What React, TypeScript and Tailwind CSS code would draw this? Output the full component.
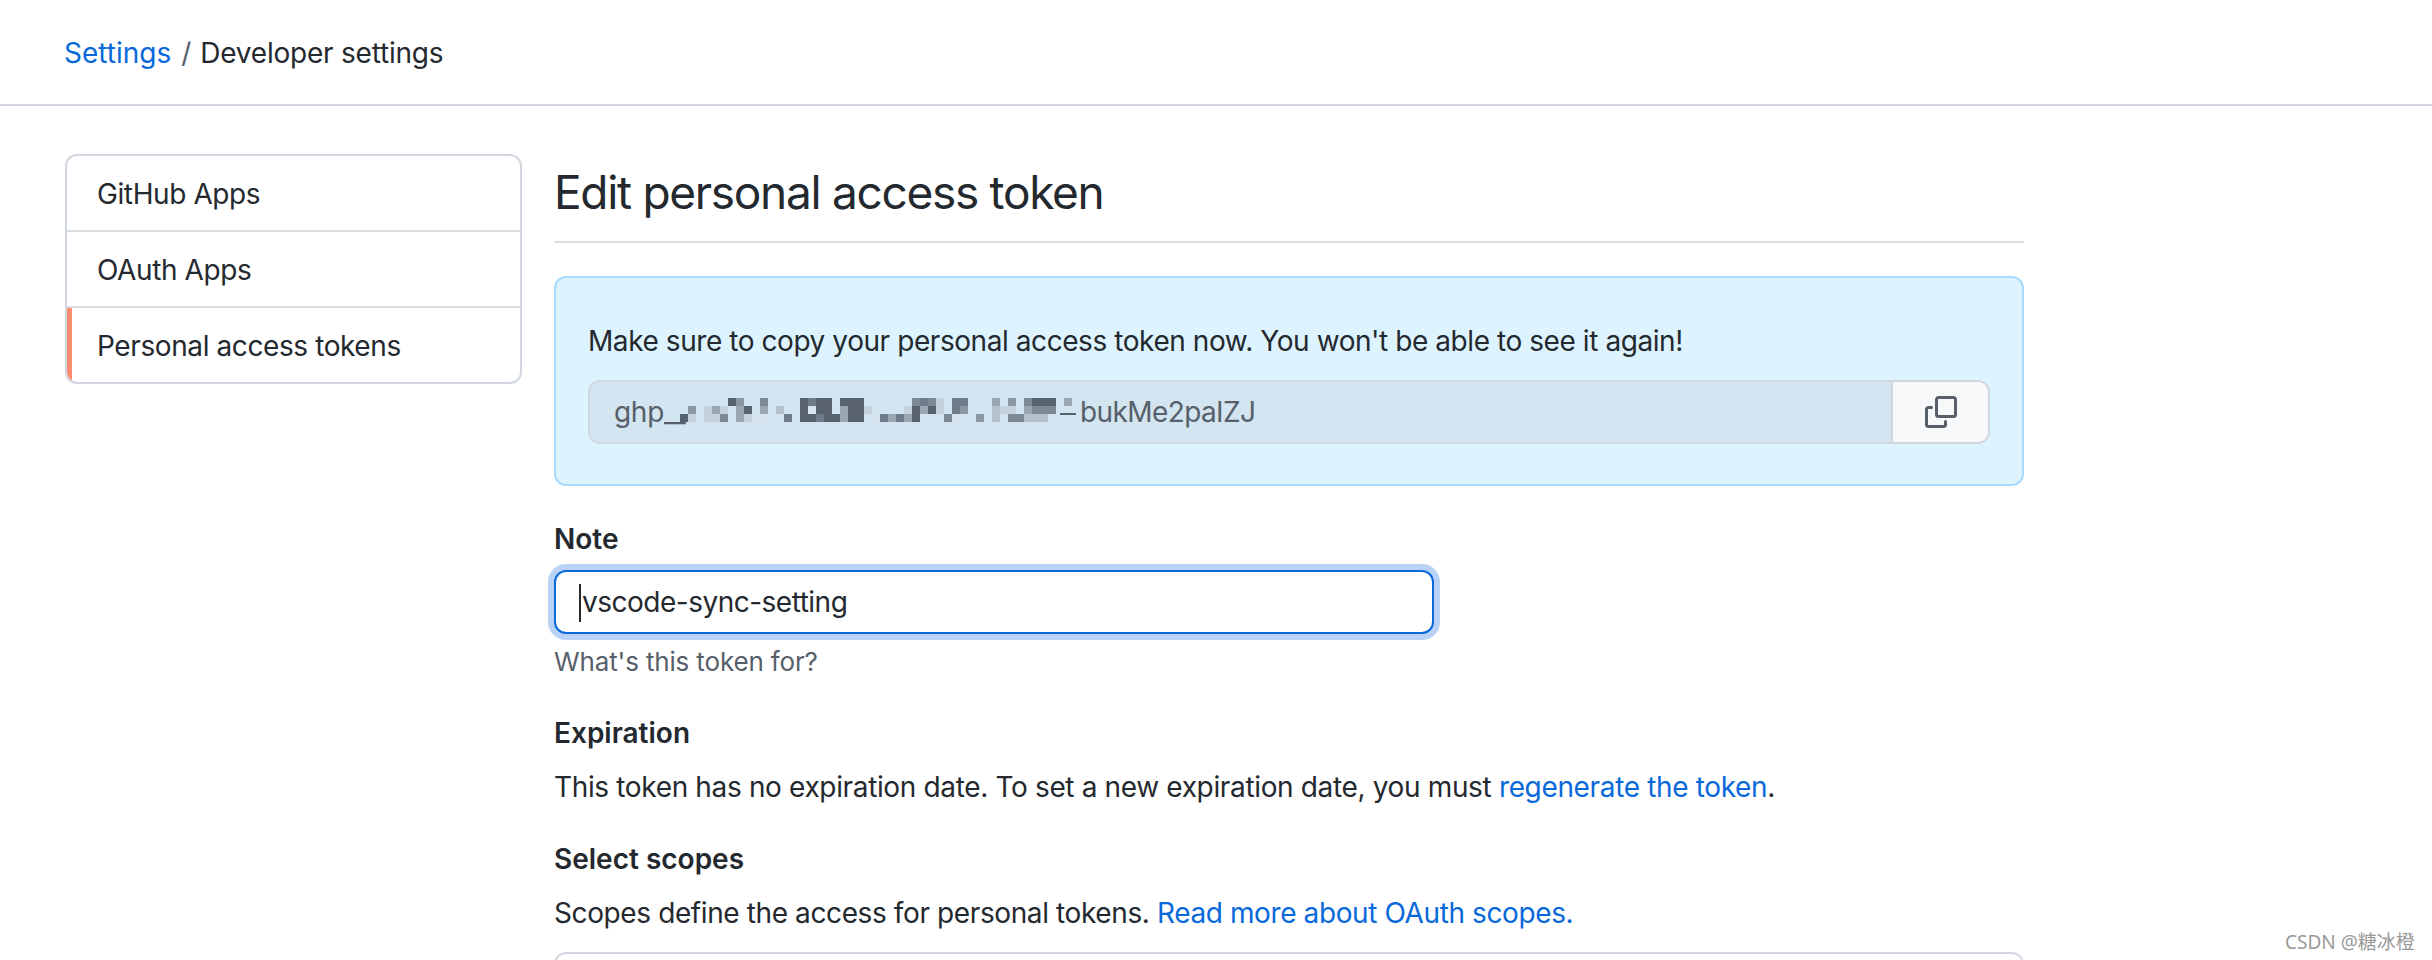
const copyPaths = [
  "M0 6.75C0 5.784.784 5 1.75 5h1.5a.75.75 0 0 1 0 1.5h-1.5a.25.25 0 0 0-.25.25v7.5c0 .138.112.25.25.25h7.5a.25.25 0 0 0 .25-.25v-1.5a.75.75 0 0 1 1.5 0v1.5A1.75 1.75 0 0 1 9.25 16h-7.5A1.75 1.75 0 0 1 0 14.25Z",
  "M5 1.75C5 .784 5.784 0 6.75 0h7.5C15.216 0 16 .784 16 1.75v7.5A1.75 1.75 0 0 1 14.25 11h-7.5A1.75 1.75 0 0 1 5 9.25Zm1.75-.25a.25.25 0 0 0-.25.25v7.5c0 .138.112.25.25.25h7.5a.25.25 0 0 0 .25-.25v-7.5a.25.25 0 0 0-.25-.25Z",
];

const D = "#59636f";
const M2 = "#7d8995";
const MD = "#6e7b88";
const M1 = "#8a97a3";
const M = "#9aa7b3";
const LM = "#b4c2ce";
const L = "#c3d2dd";
const P = "#d9e5ed";

const mosaic: [number[][], string][] = [
  [[[6,0],[15,0],[17,0],[18,0],[20,0],[21,0],[22,0],[44,0],[45,0],[46,0],[8,1],[15,1],[17,1],[18,1],[21,1],[22,1],[29,1],[31,1],[0,2],[15,2],[16,2],[18,2],[19,2],[21,2],[22,2],[29,2]], D],
  [[[16,0],[34,0],[35,0],[30,0],[34,1],[13,2],[17,2],[25,2],[27,2]], MD],
  [[[10,0],[29,0],[31,0],[43,0],[5,2],[33,2],[44,1],[45,1],[46,1],[41,2],[42,2]], M2],
  [[[7,0],[41,0],[1,1],[35,1],[37,2]], M1],
  [[[39,0],[48,0],[4,1],[7,1],[10,1],[20,1],[30,1],[43,1],[7,2],[20,2],[26,2],[28,2]], M],
  [[[12,1],[39,1],[39,2],[43,2],[44,2],[45,2]], LM],
  [[[32,0],[3,1],[5,1],[23,1],[28,1],[32,1],[40,1],[41,1],[1,2],[3,2],[4,2],[8,2]], L],
  [[[16,1],[9,2],[10,2],[24,2],[34,2]], P],
];

function Row({ label, active, last, h }: { label: string; active?: boolean; last?: boolean; h: string }) {
  return (
    <div className={`relative flex items-center pl-[30px] pt-[2px] tracking-[-0.4px] ${h} ${last ? "" : "border-b-2 border-[#d8dee4]"}`}>
      {active && <span className="absolute bottom-0 left-0 top-0 w-[5px] bg-[#fd8c73]" />}
      {label}
    </div>
  );
}

export default function App() {
  return (
    <div className="relative h-[960px] overflow-hidden bg-white font-['Inter',sans-serif] text-[28px] text-[#24292f]">
      <header className="flex h-[106px] items-center border-b-2 border-[#d0d7de] pl-[64px] pt-[1px]">
        <a className="text-[#0969da]">Settings</a>
        <span className="ml-[10px] mr-[9px] text-[#57606a]">/</span>
        <span className="tracking-[-0.22px]">Developer settings</span>
      </header>

      <div className="flex items-start gap-[32px] pl-[65px] pt-[48px]">
        <nav className="w-[457px] shrink-0 overflow-hidden rounded-[12px] border-2 border-[#d0d7de]">
          <Row label="GitHub Apps" h="h-[76px]" />
          <Row label="OAuth Apps" h="h-[76px]" />
          <Row label="Personal access tokens" h="h-[74px]" active last />
        </nav>

        <main className="w-[1470px]">
          <h1 className="flex h-[89px] items-center border-b-2 border-[#d8dee4] pb-[11px] text-[46px] font-normal leading-none tracking-[-1.3px]">
            Edit personal access token
          </h1>

          <section className="mt-[33px] h-[210px] rounded-[12px] border-2 border-[#a9dbff] bg-[#ddf4ff] px-[32px] pt-[44px]">
            <p className="h-[58px] leading-[38px] tracking-[-0.43px]">Make sure to copy your personal access token now. You won't be able to see it again!</p>
            <div className="flex h-[64px] overflow-hidden rounded-[12px] border-2 border-[#d0d7de]">
              <div className="flex flex-1 items-center bg-[#d2e5f0] pl-[24px] text-[#57606a]">
                <span className="w-[66px] shrink-0 tracking-[-0.3px]">
                  ghp<span className="inline-block origin-left scale-x-[1.7]">_</span>
                </span>
                <svg width="396" height="30" viewBox="0 0 396 30" className="mt-[1px] shrink-0">
                  {mosaic.flatMap(([cells, fill], g) =>
                    cells.map(([k, r], i) => (
                      <rect key={`${g}-${i}`} x={k * 8} y={r * 8} width={8} height={8} fill={fill} />
                    ))
                  )}
                  <rect x="380" y="15" width="16" height="2" fill="#57606a" />
                </svg>
                <span className="ml-[4px] tracking-[-0.6px]">bukMe2paIZJ</span>
              </div>
              <button className="flex w-[97px] items-center justify-center border-l-2 border-[#d0d7de] bg-[#f6f8fa]">
                <svg width="32" height="32" viewBox="0 0 16 16" fill="#57606a">
                  {copyPaths.map((d) => <path key={d} d={d} />)}
                </svg>
              </button>
            </div>
          </section>

          <label className="mt-[33px] block h-[40px] font-semibold leading-[40px]">Note</label>
          <div className="relative mt-[11px] flex h-[64px] w-[880px] items-center rounded-[12px] border-2 border-[#0969da] bg-white pl-[26px] tracking-[-0.5px] shadow-[0_0_0_6px_#b9d2f5]">
            <span className="absolute left-[23px] top-[12px] h-[38px] w-[2px] bg-[#24292f]" />
            vscode-sync-setting
          </div>
          <p className="mt-[8px] h-[40px] text-[26px] leading-[40px] tracking-[-0.15px] text-[#57606a]">What's this token for?</p>

          <h2 className="mt-[31px] h-[40px] font-semibold leading-[40px]">Expiration</h2>
          <p className="mt-[14px] h-[40px] leading-[40px] tracking-[-0.35px]">
            This token has no expiration date. To set a new expiration date, you must{" "}
            <a className="text-[#0969da]">regenerate the token</a>.
          </p>

          <h2 className="mt-[32px] h-[40px] font-semibold leading-[40px]">Select scopes</h2>
          <p className="mt-[14px] h-[40px] leading-[40px] tracking-[-0.39px]">
            Scopes define the access for personal tokens.{" "}
            <a className="text-[#0969da]">Read more about OAuth scopes.</a>
          </p>

          <div className="mt-[19px] h-[100px] rounded-[12px] border-2 border-[#d0d7de]" />
        </main>
      </div>

      <div className="absolute left-[2285px] top-[930px] font-['Noto_Sans','Noto_Sans_CJK_SC',sans-serif] text-[19px] leading-[24px] text-[#999999]">
        CSDN @糖冰橙
      </div>
    </div>
  );
}
